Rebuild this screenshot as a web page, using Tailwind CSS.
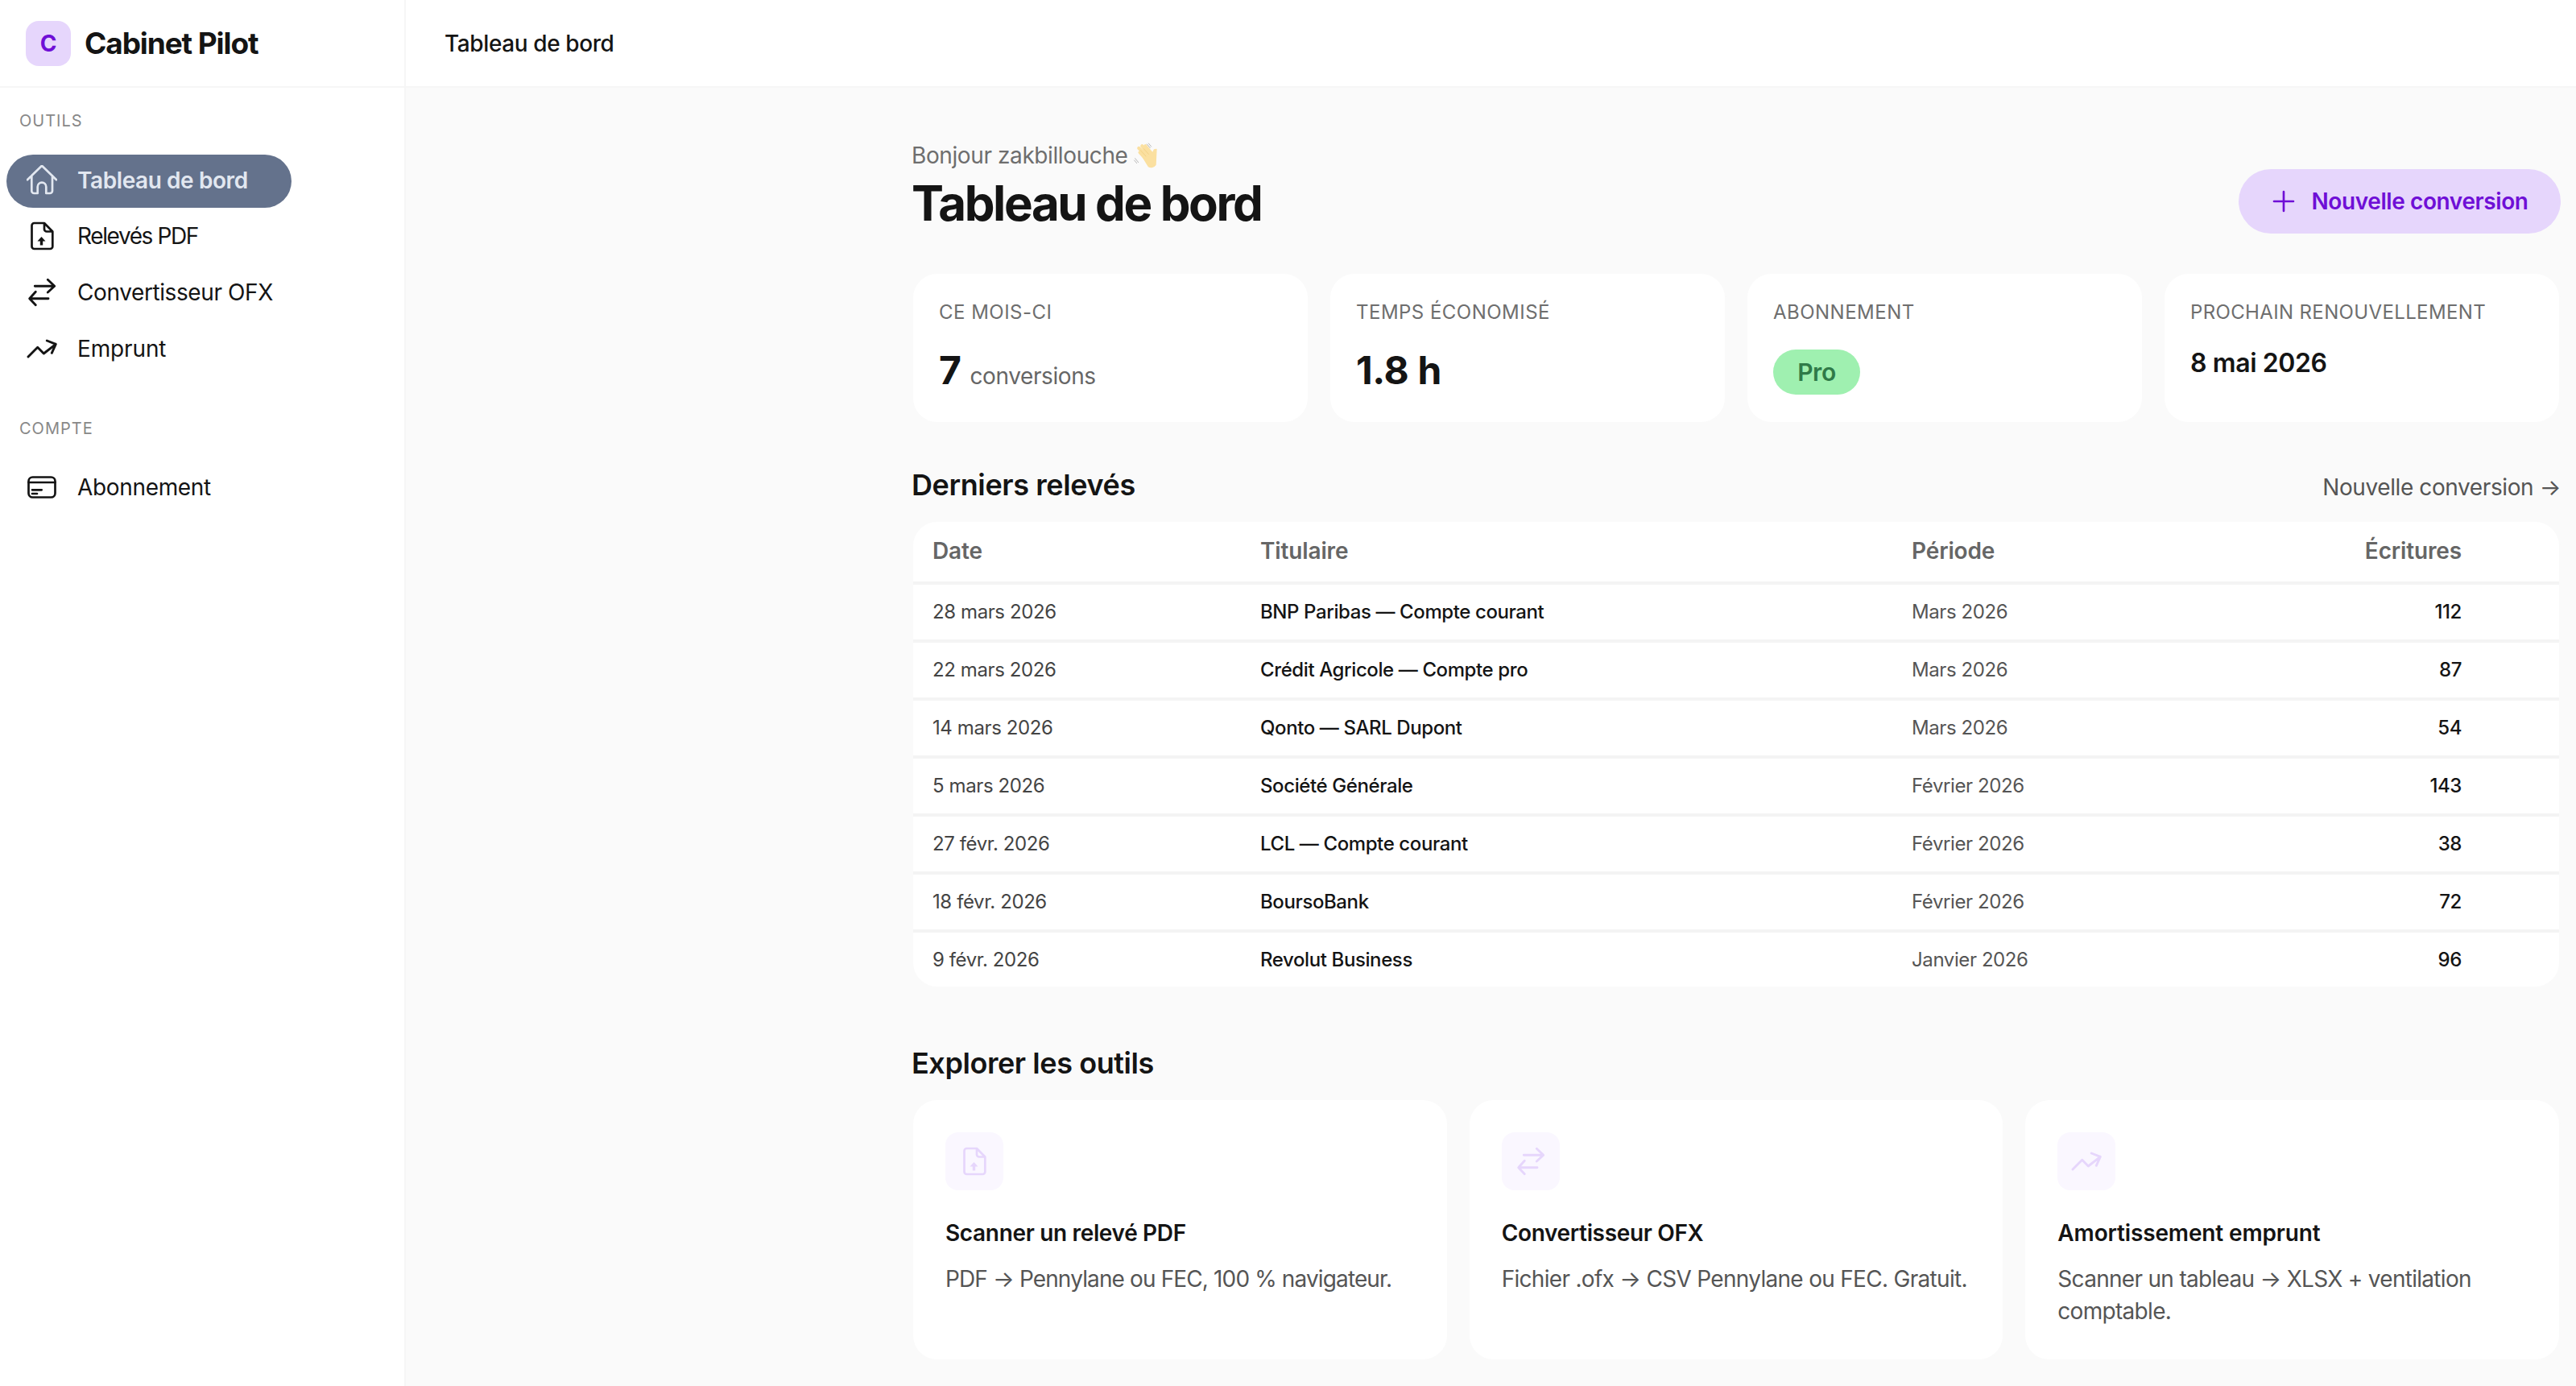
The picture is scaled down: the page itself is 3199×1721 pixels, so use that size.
<!DOCTYPE html>
<html lang="fr">
<head>
  <meta charset="UTF-8">
  <meta name="viewport" content="width=device-width, initial-scale=1.0">
  <title>Tableau de bord - Cabinet Pilot</title>
  <script src="https://cdn.jsdelivr.net/npm/@tailwindcss/browser@4"></script>
</head>
<body class="h-[1721px] overflow-hidden bg-[#fafafa] text-[#141414] font-['Inter',sans-serif] tracking-[-0.025em] flex flex-col">

  <header class="h-[109px] shrink-0 bg-white border-b-2 border-[#f6f6f6] flex">
    <div class="w-[504px] shrink-0 border-r-2 border-[#f6f6f6] flex items-center pl-[32px] gap-[17px]">
      <div class="w-[56px] h-[56px] rounded-[16px] bg-[#e6d6fc] text-[#6f0fd6] font-bold text-[28px] flex items-center justify-center">C</div>
      <span class="text-[37px] font-bold tracking-[-0.03em]">Cabinet Pilot</span>
    </div>
    <div class="flex items-center pl-[48px] text-[28px] font-medium">Tableau de bord</div>
  </header>

  <div class="flex flex-1 min-h-0">
    <!-- sidebar -->
    <aside class="w-[504px] shrink-0 bg-white border-r-2 border-[#f6f6f6]">
      <p class="pl-[24px] mt-[29px] text-[20px] tracking-[0.05em] leading-[24px] text-[#888]">OUTILS</p>
      <nav class="mt-[30px] text-[28px]">
        <a class="ml-[8px] w-[354px] h-[66px] pb-[2px] rounded-full bg-[#64728c] text-[#e2e7f0] font-semibold tracking-[-0.015em] flex items-center pl-[25px] gap-[25px]">
          <svg class="w-[38px] h-[38px]" viewBox="13 15 38 38" fill="none" stroke="currentColor" stroke-width="2.7" stroke-linecap="round" stroke-linejoin="round"><path d="M14 33.300 32 15.700l18 17.600M19.300 28v19a3 3 0 0 0 3 3h4.400v-8a5.300 5.300 0 0 1 10.600 0v8h4.700a3 3 0 0 0 3-3V28"/></svg>
          Tableau de bord
        </a>
        <a class="h-[70px] flex items-center pl-[33px] gap-[25px] tracking-[-0.05em]">
          <svg class="w-[38px] h-[38px]" viewBox="13 11 38 38" fill="none" stroke="currentColor" stroke-width="2.7" stroke-linecap="round" stroke-linejoin="round"><path d="M22.500 14H35l10.300 10.500V43a3 3 0 0 1-3 3H22.500a3 3 0 0 1-3-3V17a3 3 0 0 1 3-3zM35 14v7.500a3 3 0 0 0 3 3h7.300"/><path fill="currentColor" stroke="none" d="M31.500 31 36.500 36.500H33.200V41.500H29.800V36.500H26.500z"/></svg>
          Relevés PDF
        </a>
        <a class="h-[70px] flex items-center pl-[33px] gap-[25px]">
          <svg class="w-[38px] h-[38px]" viewBox="13 11 38 38" fill="none" stroke="currentColor" stroke-width="2.900" stroke-linecap="round" stroke-linejoin="round"><path d="M23.300 22.300H47M39.300 14.300l8.400 8-8.400 7.700M40 37.700H17.300M24.300 29.300l-7.600 8.400 7.600 8"/></svg>
          Convertisseur OFX
        </a>
        <a class="h-[70px] flex items-center pl-[33px] gap-[25px] tracking-[-0.005em]">
          <svg class="w-[38px] h-[38px]" viewBox="13 81 38 38" fill="none" stroke="currentColor" stroke-width="2.900" stroke-linecap="round" stroke-linejoin="round"><path d="M15 110 26.700 98.300 34.300 106 49.300 94.300M38.300 90l11 4.300-5 11"/></svg>
          Emprunt
        </a>
      </nav>
      <p class="pl-[24px] mt-[52px] text-[20px] tracking-[0.05em] leading-[24px] text-[#888]">COMPTE</p>
      <a class="mt-[26px] h-[70px] flex items-center pl-[33px] gap-[25px] text-[28px] tracking-[-0.012em]">
        <svg class="w-[38px] h-[38px]" viewBox="13 12 38 38" fill="none" stroke="currentColor" stroke-width="2.700" stroke-linecap="round" stroke-linejoin="round"><rect x="15.500" y="18.500" width="33" height="25" rx="5"/><path d="M15.500 25h33M20 34.300h11.700M20 39h6"/></svg>
        Abonnement
      </a>
    </aside>

    <!-- main -->
    <main class="flex-1 pl-[628px] pr-[19px]">
      <div class="flex justify-between items-end pt-[65px]">
        <div>
          <p class="h-[38px] text-[28px] leading-[38px] text-[#6e6e6e] flex items-center">Bonjour zakbillouche
            <svg class="w-[50px] h-[50px] shrink-0 -ml-[3px] mt-[2px] -mb-[2px] -my-[6px]" viewBox="0 0 150 150" fill="none" stroke-linecap="round">
              <path stroke="#b9b9b9" stroke-width="3" d="M82 27l12 14M88 24l10 12M38 80l12 15M35 87l9 11"/>
              <path fill="#fbe0a0" stroke="#fbe0a0" stroke-width="4" stroke-linejoin="round" d="M62 68 88 110c8 5 20 3 26-6l3-58-8 2-10 20z"/>
              <path stroke="#fbe0a0" stroke-width="13" d="M90 78 52 42M98 72 64 34M104 68 76 34M84 88 56 58"/>
              <path stroke="#efc878" stroke-width="2" d="M88 64 70 44M78 72 58 50"/>
            </svg>
          </p>
          <h1 class="mt-[5px] mb-[4px] text-[60px] leading-[70px] font-bold tracking-[-0.04em]">Tableau de bord</h1>
        </div>
        <button class="h-[80px] w-[400px] mb-[1px] rounded-full bg-[#e6d6fc] text-[#6f0fd6] text-[28px] font-semibold flex items-center justify-center gap-[18px]">
          <svg class="w-[32px] h-[32px]" viewBox="0 0 24 24" fill="none" stroke="currentColor" stroke-width="2" stroke-linecap="round"><path d="M12 3v18M3 12h18"/></svg>
          Nouvelle conversion
        </button>
      </div>

      <section class="mt-[47px] grid grid-cols-4 gap-[24px]">
        <div class="h-[188px] rounded-[32px] bg-white border-2 border-[#fafafa] p-[32px]">
          <p class="text-[24px] leading-[32px] tracking-[0.02em] text-[#6e6e6e]">CE MOIS-CI</p>
          <p class="mt-[28px] text-[48px] leading-[56px] font-bold">7 <span class="text-[28px] font-normal text-[#666]">conversions</span></p>
        </div>
        <div class="h-[188px] rounded-[32px] bg-white border-2 border-[#fafafa] p-[32px]">
          <p class="text-[24px] leading-[32px] tracking-[0.02em] text-[#6e6e6e]">TEMPS ÉCONOMISÉ</p>
          <p class="mt-[28px] text-[48px] leading-[56px] font-bold">1.8 h</p>
        </div>
        <div class="h-[188px] rounded-[32px] bg-white border-2 border-[#fafafa] p-[32px]">
          <p class="text-[24px] leading-[32px] tracking-[0.02em] text-[#6e6e6e]">ABONNEMENT</p>
          <span class="mt-[30px] h-[56px] w-[108px] rounded-full bg-[#9ff0b0] text-[#2f7a48] text-[30px] font-semibold flex items-center justify-center">Pro</span>
        </div>
        <div class="h-[188px] rounded-[32px] bg-white border-2 border-[#fafafa] p-[32px]">
          <p class="text-[24px] leading-[32px] tracking-[0.015em] text-[#6e6e6e]">PROCHAIN RENOUVELLEMENT</p>
          <p class="mt-[26px] text-[32px] leading-[42px] font-semibold">8 mai 2026</p>
        </div>
      </section>

      <div class="mt-[52px] flex justify-between items-center h-[48px]">
        <h2 class="text-[36px] font-semibold">Derniers relevés</h2>
        <a class="text-[28px] text-[#555] pt-[6px]">Nouvelle conversion →</a>
      </div>

      <div class="mt-[20px] bg-white border-2 border-[#fafafa] rounded-[32px] overflow-hidden">
        <table class="w-full text-[24px] table-fixed">
          <thead>
            <tr class="h-[76px] border-b-4 border-[#f4f4f4] text-[28px] text-[#666] tracking-[-0.005em] text-left">
              <th class="w-[431px] pl-[24px] pb-[2px] font-semibold">Date</th>
              <th class="w-[809px] pb-[2px] font-semibold">Titulaire</th>
              <th class="w-[500px] pb-[2px] font-semibold">Période</th>
              <th class="text-right pr-[121px] pb-[2px] font-semibold">Écritures</th>
            </tr>
          </thead>
          <tbody>
            <tr class="h-[72px] border-b-4 border-[#f4f4f4]"><td class="pl-[24px] text-[#444]">28 mars 2026</td><td class="font-medium">BNP Paribas — Compte courant</td><td class="text-[#555]">Mars 2026</td><td class="text-right pr-[121px] font-medium">112</td></tr>
            <tr class="h-[72px] border-b-4 border-[#f4f4f4]"><td class="pl-[24px] text-[#444]">22 mars 2026</td><td class="font-medium">Crédit Agricole — Compte pro</td><td class="text-[#555]">Mars 2026</td><td class="text-right pr-[121px] font-medium">87</td></tr>
            <tr class="h-[72px] border-b-4 border-[#f4f4f4]"><td class="pl-[24px] text-[#444]">14 mars 2026</td><td class="font-medium">Qonto — SARL Dupont</td><td class="text-[#555]">Mars 2026</td><td class="text-right pr-[121px] font-medium">54</td></tr>
            <tr class="h-[72px] border-b-4 border-[#f4f4f4]"><td class="pl-[24px] text-[#444]">5 mars 2026</td><td class="font-medium">Société Générale</td><td class="text-[#555]">Février 2026</td><td class="text-right pr-[121px] font-medium">143</td></tr>
            <tr class="h-[72px] border-b-4 border-[#f4f4f4]"><td class="pl-[24px] text-[#444]">27 févr. 2026</td><td class="font-medium">LCL — Compte courant</td><td class="text-[#555]">Février 2026</td><td class="text-right pr-[121px] font-medium">38</td></tr>
            <tr class="h-[72px] border-b-4 border-[#f4f4f4]"><td class="pl-[24px] text-[#444]">18 févr. 2026</td><td class="font-medium">BoursoBank</td><td class="text-[#555]">Février 2026</td><td class="text-right pr-[121px] font-medium">72</td></tr>
            <tr class="h-[69px]"><td class="pl-[24px] text-[#444]">9 févr. 2026</td><td class="font-medium">Revolut Business</td><td class="text-[#555]">Janvier 2026</td><td class="text-right pr-[121px] font-medium">96</td></tr>
          </tbody>
        </table>
      </div>

      <h2 class="mt-[69px] text-[36px] leading-[48px] font-semibold tracking-[-0.012em]">Explorer les outils</h2>

      <section class="mt-[20px] grid grid-cols-3 gap-[24px]">
        <div class="h-[326px] rounded-[32px] bg-white border-2 border-[#fafafa] p-[40px]">
          <div class="w-[72px] h-[72px] rounded-[16px] bg-[#faf7ff] text-[#e6d6fc] flex items-center justify-center">
            <svg class="w-[38px] h-[38px]" viewBox="13 11 38 38" fill="none" stroke="currentColor" stroke-width="2.7" stroke-linecap="round" stroke-linejoin="round"><path d="M22.500 14H35l10.300 10.500V43a3 3 0 0 1-3 3H22.500a3 3 0 0 1-3-3V17a3 3 0 0 1 3-3zM35 14v7.500a3 3 0 0 0 3 3h7.300"/><path fill="currentColor" stroke="none" d="M31.500 31 36.500 36.500H33.200V41.500H29.800V36.500H26.500z"/></svg>
          </div>
          <h3 class="mt-[34px] text-[28px] leading-[38px] font-semibold tracking-[-0.012em]">Scanner un relevé PDF</h3>
          <p class="mt-[18px] text-[28px] leading-[40px] tracking-[-0.031em] text-[#555]">PDF → Pennylane ou FEC, 100 % navigateur.</p>
        </div>
        <div class="h-[326px] rounded-[32px] bg-white border-2 border-[#fafafa] p-[40px]">
          <div class="w-[72px] h-[72px] rounded-[16px] bg-[#faf7ff] text-[#e6d6fc] flex items-center justify-center">
            <svg class="w-[38px] h-[38px]" viewBox="13 11 38 38" fill="none" stroke="currentColor" stroke-width="2.9" stroke-linecap="round" stroke-linejoin="round"><path d="M23.300 22.300H47M39.300 14.300l8.400 8-8.400 7.700M40 37.700H17.300M24.300 29.300l-7.600 8.400 7.600 8"/></svg>
          </div>
          <h3 class="mt-[34px] text-[28px] leading-[38px] font-semibold tracking-[-0.012em]">Convertisseur OFX</h3>
          <p class="mt-[18px] text-[28px] leading-[40px] tracking-[-0.025em] whitespace-nowrap text-[#555]">Fichier .ofx → CSV Pennylane ou FEC. Gratuit.</p>
        </div>
        <div class="h-[326px] rounded-[32px] bg-white border-2 border-[#fafafa] p-[40px]">
          <div class="w-[72px] h-[72px] rounded-[16px] bg-[#faf7ff] text-[#e6d6fc] flex items-center justify-center">
            <svg class="w-[38px] h-[38px]" viewBox="13 81 38 38" fill="none" stroke="currentColor" stroke-width="2.9" stroke-linecap="round" stroke-linejoin="round"><path d="M15 110 26.700 98.300 34.300 106 49.300 94.300M38.300 90l11 4.300-5 11"/></svg>
          </div>
          <h3 class="mt-[34px] text-[28px] leading-[38px] font-semibold tracking-[-0.005em]">Amortissement emprunt</h3>
          <p class="mt-[18px] text-[28px] leading-[40px] tracking-[-0.025em] text-[#555]">Scanner un tableau → XLSX + ventilation comptable.</p>
        </div>
      </section>
    </main>
  </div>

</body>
</html>
